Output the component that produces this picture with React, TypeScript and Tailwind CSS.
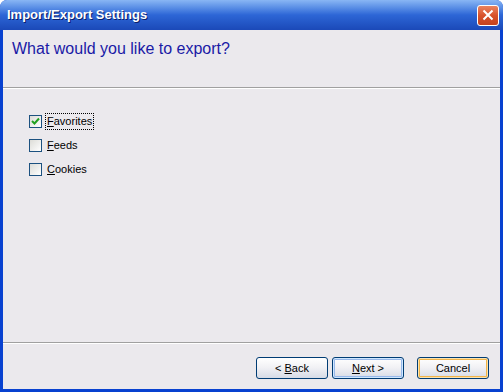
import React from 'react';

const font = { fontFamily: '"Liberation Sans", Arial, sans-serif' };

function CheckBox({ checked, label, accel, focused }: { checked?: boolean; label: string; accel: string; focused?: boolean }) {
  const rest = label.slice(1);
  return (
    <div className="flex items-center h-[13px] gap-[3px]">
      <div className="w-[13px] h-[13px] border border-[#1c5180] bg-gradient-to-br from-[#dcdcd7] to-[#ffffff] flex items-center justify-center">
        {checked && (
          <svg width="9" height="9" viewBox="0 0 9 9">
            <path d="M1 4 L3.5 6.5 L8 1.5" stroke="#21a121" strokeWidth="2" fill="none" />
          </svg>
        )}
      </div>
      <span
        className={
          'text-[11px] leading-[13px] text-black px-[1px] py-[1px] ' +
          (focused ? 'border border-dotted border-black' : 'border border-transparent')
        }
      >
        <span className="underline">{accel}</span>
        {rest}
      </span>
    </div>
  );
}

function Btn({ children, kind }: { children: React.ReactNode; kind?: 'default' | 'hover' }) {
  const inner =
    kind === 'default'
      ? 'shadow-[inset_0_0_0_1px_#cee7ff,inset_0_0_0_2px_#98b8ea]'
      : kind === 'hover'
      ? 'shadow-[inset_0_0_0_1px_#fce3ad,inset_0_0_0_2px_#f1b44a]'
      : '';
  return (
    <div
      className={
        'w-[72px] h-[22px] rounded-[3px] border border-[#003c74] bg-gradient-to-b from-[#ffffff] via-[#f0f0f4] to-[#d6dbe6] flex items-center justify-center text-[11px] text-black ' +
        inner
      }
    >
      {children}
    </div>
  );
}

export default function App() {
  return (
    <div className="w-[503px] h-[392px] bg-white" style={font}>
      <div className="w-full h-full flex flex-col rounded-t-[7px] bg-[#0841d0] overflow-hidden">
        <div className="h-[30px] flex items-center justify-between pl-[7px] pr-[4px] bg-gradient-to-b from-[#89b6f4] via-[#2d66d6] to-[#1b49b8]">
          <span className="text-white font-bold text-[13px] [text-shadow:1px_1px_0_#0a1e6a]">Import/Export Settings</span>
          <div className="w-[22px] h-[21px] rounded-[3px] border border-white bg-gradient-to-b from-[#e9835f] via-[#d8522b] to-[#c4421d] flex items-center justify-center">
            <svg width="12" height="12" viewBox="0 0 12 12">
              <path d="M1.5 1.5 L10.5 10.5 M10.5 1.5 L1.5 10.5" stroke="#ffffff" strokeWidth="2" />
            </svg>
          </div>
        </div>
        <div className="flex-1 mx-[3px] mb-[3px] bg-[#ebe9ed] flex flex-col">
          <div className="h-[57px] pl-[9px] pt-[7px]">
            <span className="text-[16px] text-[#1a1aa6]">What would you like to export?</span>
          </div>
          <div className="h-[1px] bg-[#a0a0a0]" />
          <div className="h-[1px] bg-white" />
          <div className="flex-1 pl-[26px] pt-[26px] flex flex-col gap-[11px]">
            <CheckBox checked label="Favorites" accel="F" focused />
            <CheckBox label="Feeds" accel="F" />
            <CheckBox label="Cookies" accel="C" />
          </div>
          <div className="h-[1px] bg-[#a0a0a0]" />
          <div className="h-[1px] bg-white" />
          <div className="h-[45px] flex items-start justify-end pt-[13px] pr-[11px]">
            <Btn>
              &lt;&nbsp;<span className="underline">B</span>ack
            </Btn>
            <div className="w-[4px]" />
            <Btn kind="default">
              <span className="underline">N</span>ext&nbsp;&gt;
            </Btn>
            <div className="w-[13px]" />
            <Btn kind="hover">Cancel</Btn>
          </div>
        </div>
      </div>
    </div>
  );
}
